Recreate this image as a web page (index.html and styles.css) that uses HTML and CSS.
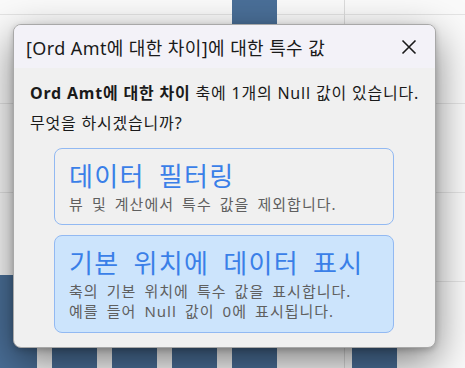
FILE: index.html
```html
<!DOCTYPE html>
<html lang="ko">
<head>
    <meta charset="UTF-8">
    <title>특수 값</title>
    <link rel="stylesheet" href="styles.css">
</head>
<body>
    <div class="chart">
        <div class="grid-lines">
            <div class="grid-line"></div>
            <div class="grid-line"></div>
            <div class="grid-line"></div>
            <div class="grid-line"></div>
        </div>
        <div class="axis-line"></div>
        <div class="bars">
            <div class="col"><div class="bar" style="height: 93px;"></div></div>
            <div class="col"><div class="bar" style="height: 30px;"></div></div>
            <div class="col"><div class="bar" style="height: 30px;"></div></div>
            <div class="col"><div class="bar" style="height: 30px;"></div></div>
            <div class="col"><div class="bar" style="height: 368px;"></div></div>
            <div class="col"><div class="bar" style="height: 0px;"></div></div>
            <div class="col"><div class="bar" style="height: 30px;"></div></div>
        </div>
    </div>

    <div class="dialog">
        <div class="dialog-header">
            <span class="dialog-title">[Ord Amt에 대한 차이]에 대한 특수 값</span>
            <button class="close-button" aria-label="닫기">
                <svg width="16" height="16" viewBox="0 0 16 16">
                    <path d="M1.5 1.5 L14.5 14.5 M14.5 1.5 L1.5 14.5" stroke="#1a1a1a" stroke-width="1.6" fill="none"/>
                </svg>
            </button>
        </div>
        <div class="dialog-body">
            <p class="message"><b>Ord Amt에 대한 차이</b> 축에 1개의 Null 값이 있습니다.</p>
            <p class="message">무엇을 하시겠습니까?</p>

            <div class="option">
                <div class="option-title">데이터 필터링</div>
                <div class="option-desc">뷰 및 계산에서 특수 값을 제외합니다.</div>
            </div>
            <div class="option selected">
                <div class="option-title">기본 위치에 데이터 표시</div>
                <div class="option-desc">축의 기본 위치에 특수 값을 표시합니다.<br>예를 들어 Null 값이 0에 표시됩니다.</div>
            </div>
        </div>
    </div>
</body>
</html>
```

FILE: styles.css
```css
* {
    margin: 0;
    padding: 0;
    box-sizing: border-box;
}

body {
    width: 465px;
    height: 368px;
    overflow: hidden;
    position: relative;
    background: #fafafa;
    font-family: "Noto Sans", "Noto Sans CJK KR", sans-serif;
}

/* chart behind the dialog */
.chart {
    position: absolute;
    inset: 0;
}

.grid-lines {
    padding-top: 14px;
    display: flex;
    flex-direction: column;
    gap: 88px;
}

.grid-line {
    height: 1px;
    background: #e4e4e4;
}

.axis-line {
    position: absolute;
    left: 344px;
    top: 0;
    bottom: 0;
    width: 1px;
    background: #dcdcdc;
}

.bars {
    position: absolute;
    left: -8px;
    bottom: 0;
    height: 368px;
    display: flex;
    align-items: flex-end;
}

.col {
    width: 60px;
    display: flex;
    align-items: flex-end;
}

.bar {
    width: 45px;
    background: #4a6f98;
}

/* dialog */
.dialog {
    position: absolute;
    left: 13px;
    top: 24px;
    width: 423px;
    height: 324px;
    background: #f0f0f0;
    border: 1px solid #a8a8a8;
    border-radius: 8px;
    overflow: hidden;
    box-shadow: 0 14px 40px rgba(0, 0, 0, 0.5), 0 2px 6px rgba(0, 0, 0, 0.2);
}

.dialog-header {
    height: 43px;
    background: #f3f2f8;
    display: flex;
    align-items: center;
    justify-content: space-between;
    padding: 0 18px 0 12px;
}

.dialog-title {
    font-size: 18px;
    letter-spacing: 0.4px;
    color: #1a1a1a;
}

.close-button {
    background: none;
    border: none;
    display: flex;
    cursor: pointer;
}

.dialog-body {
    padding: 10px 0 0 16px;
}

.message {
    font-size: 16px;
    line-height: 30px;
    letter-spacing: 0.8px;
    color: #1a1a1a;
}

.message b {
    font-weight: 700;
}

.option {
    width: 340px;
    margin-left: 24px;
    border: 1px solid #92b9f2;
    border-radius: 8px;
    padding: 9px 14px 10px;
    cursor: pointer;
}

.option:first-of-type {
    margin-top: 10px;
}

.option + .option {
    margin-top: 10px;
}

.option.selected {
    background: #cce4fc;
    padding-bottom: 11px;
}

.option-title {
    font-size: 26px;
    line-height: 36px;
    letter-spacing: 1.3px;
    word-spacing: 6px;
    color: #3a7fe8;
}

.option-desc {
    font-size: 15px;
    line-height: 20px;
    letter-spacing: 1px;
    word-spacing: 3.2px;
    color: #5f5f5f;
}
```
